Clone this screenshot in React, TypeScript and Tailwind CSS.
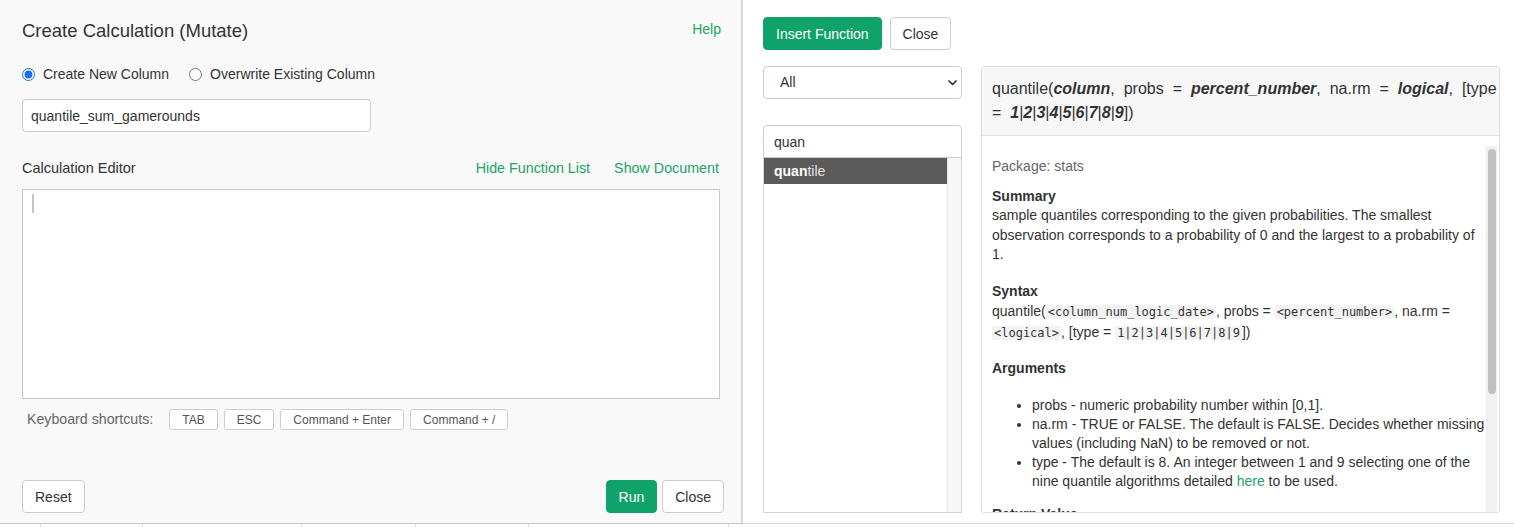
import React from "react";

const font = "font-['Liberation_Sans',Arial,sans-serif]";

function Button({
  children,
  primary,
  className = "",
}: {
  children: React.ReactNode;
  primary?: boolean;
  className?: string;
}) {
  return (
    <button
      className={
        "h-[33px] px-3 rounded-[4px] border text-[14px] leading-5 flex items-center " +
        (primary
          ? "bg-[#0fa36b] border-[#0fa36b] text-white "
          : "bg-white border-[#cccccc] text-[#333] ") +
        className
      }
    >
      {children}
    </button>
  );
}

function Kbd({ children }: { children: React.ReactNode }) {
  return (
    <span className="h-[21px] px-3 flex items-center rounded-[3px] border border-[#cccccc] bg-white text-[12px] text-[#555]">
      {children}
    </span>
  );
}

function Code({ children }: { children: React.ReactNode }) {
  return (
    <code className="font-['DejaVu_Sans_Mono',monospace] text-[12px] bg-[#f3f3f3] rounded-[3px] px-[2px] text-[#333]">
      {children}
    </code>
  );
}

function Radio({ checked, label }: { checked?: boolean; label: string }) {
  return (
    <label className="flex items-center gap-2 text-[14px] text-[#333]">
      <input
        type="radio"
        name="mode"
        defaultChecked={checked}
        className="m-0 w-[13px] h-[13px] accent-[#1a6fe8]"
      />
      {label}
    </label>
  );
}

function LeftPanel() {
  return (
    <div className="w-[743px] h-[524px] shrink-0 bg-[#f9f9f9] border-r-2 border-b border-r-[#d9d9d9] border-b-[#c4c4c4] pl-[22px] pr-[21px] pt-[19px] flex flex-col">
      <div className="flex justify-between items-start">
        <h1 className="text-[18.5px] leading-6 text-[#333]">Create Calculation (Mutate)</h1>
        <a className="text-[14px] leading-5 text-[#21a366] mr-[-1px]">Help</a>
      </div>

      <div className="mt-[21px] h-5 flex items-center gap-5">
        <Radio checked label="Create New Column" />
        <Radio label="Overwrite Existing Column" />
      </div>

      <input
        readOnly
        value="quantile_sum_gamerounds"
        className="mt-[15px] w-[349px] h-[33px] px-2 rounded-[4px] border border-[#cccccc] bg-white text-[14px] text-[#333] outline-none"
      />

      <div className="mt-[27px] h-5 flex items-center justify-between">
        <span className="text-[14.5px] text-[#333]">Calculation Editor</span>
        <div className="flex gap-6 text-[14.3px] text-[#21a366] mr-[1px]">
          <a>Hide Function List</a>
          <a>Show Document</a>
        </div>
      </div>

      <div className="mt-[10px] h-[210px] border border-[#c8c8c8] bg-white pl-[9px] pt-[4px]">
        <div className="w-[2px] h-[19px] bg-[#c4c4c4]" />
      </div>

      <div className="mt-[10px] flex items-center gap-[6px] pl-[5px]">
        <span className="text-[14.2px] text-[#666] mr-[10px]">Keyboard shortcuts:</span>
        <Kbd>TAB</Kbd>
        <Kbd>ESC</Kbd>
        <Kbd>Command + Enter</Kbd>
        <Kbd>Command + /</Kbd>
      </div>

      <div className="mt-[50px] flex items-center mr-[-4px]">
        <Button>Reset</Button>
        <div className="ml-auto flex gap-[5px]">
          <Button primary>Run</Button>
          <Button>Close</Button>
        </div>
      </div>
    </div>
  );
}

function FunctionList() {
  return (
    <div className="w-[199px] shrink-0 flex flex-col">
      <div className="h-[33px] rounded-[4px] border border-[#cccccc] bg-white pl-4 pr-[4px] flex items-center justify-between text-[14px] text-[#333]">
        <span>All</span>
        <svg width="9" height="6" viewBox="0 0 9 6" fill="none">
          <path d="M1 1l3.5 3.5L8 1" stroke="#333" strokeWidth="1.7" strokeLinecap="round" strokeLinejoin="round" />
        </svg>
      </div>

      <div className="mt-[26px] h-[33px] rounded-t-[4px] border border-[#cccccc] bg-white pl-[10px] pt-[1px] flex items-center text-[14px] text-[#333]">
        quan
      </div>

      <div className="h-[355px] flex border-x border-b border-[#d6d6d6] bg-white">
        <div className="flex-1">
          <div className="h-[26px] bg-[#5b5b5b] pl-[10px] flex items-center text-[14px]">
            <b className="text-white">quan</b>
            <span className="text-[#e4e4e4]">tile</span>
          </div>
        </div>
        <div className="w-[14px] bg-[#f7f7f7] border-l border-[#e6e6e6]" />
      </div>
    </div>
  );
}

function DocPanel() {
  const bi = "font-bold italic";
  return (
    <div className="w-[519px] h-[447px] shrink-0 rounded-[3px] border border-[#dddddd] bg-white overflow-hidden flex flex-col">
      <div className="bg-[#f7f7f7] border-b border-[#e2e2e2] pl-[10px] pr-[2px] pt-[10px] pb-[10px] text-[16px] leading-6 text-[#333] [word-spacing:4.5px]">
        quantile(<span className={bi}>column</span>, probs = <span className={bi}>percent_number</span>, na.rm ={" "}
        <span className={bi}>logical</span>, [type
        <br />= <span className={bi}>1</span>|<span className={bi}>2</span>|<span className={bi}>3</span>|
        <span className={bi}>4</span>|<span className={bi}>5</span>|<span className={bi}>6</span>|
        <span className={bi}>7</span>|<span className={bi}>8</span>|<span className={bi}>9</span>])
      </div>

      <div className="flex-1 min-h-0 flex pt-[10px] pr-[2px]">
        <div className="flex-1 min-w-0 pl-[10px] pt-[11px] text-[14px] leading-[19.5px] text-[#333]">
          <p className="text-[#666]">Package: stats</p>

          <h3 className="mt-[10px] font-bold">Summary</h3>
          <p>
            sample quantiles corresponding to the given probabilities. The smallest observation corresponds to a
            probability of 0 and the largest to a probability of 1.
          </p>

          <h3 className="mt-[17px] font-bold">Syntax</h3>
          <p className="mt-[1px]">
            quantile(<Code>&lt;column_num_logic_date&gt;</Code>, probs = <Code>&lt;percent_number&gt;</Code>, na.rm ={" "}
            <Code>&lt;logical&gt;</Code>, [type = <Code>1|2|3|4|5|6|7|8|9</Code>])
          </p>

          <h3 className="mt-[16px] font-bold">Arguments</h3>
          <ul className="mt-[17px] pl-10 list-disc leading-[19px]">
            <li>probs - numeric probability number within [0,1].</li>
            <li>na.rm - TRUE or FALSE. The default is FALSE. Decides whether missing values (including NaN) to be removed or not.</li>
            <li>
              type - The default is 8. An integer between 1 and 9 selecting one of the nine quantile algorithms detailed{" "}
              <a className="text-[#21a366]">here</a> to be used.
            </li>
          </ul>

          <h3 className="mt-[14px] font-bold">Return Value</h3>
        </div>
        <div className="w-[11px] shrink-0 bg-[#f1f1f1] border-l border-[#e8e8e8] pt-[3px] px-[1px]">
          <div className="h-[245px] rounded-full bg-[#c1c1c1]" />
        </div>
      </div>
    </div>
  );
}

function RightPanel() {
  return (
    <div className="flex-1 h-[524px] bg-white border-b border-[#d9d9d9] pl-[20px] pt-[17px] flex flex-col">
      <div className="flex gap-2">
        <Button primary>Insert Function</Button>
        <Button>Close</Button>
      </div>
      <div className="mt-4 flex gap-[19px]">
        <FunctionList />
        <DocPanel />
      </div>
    </div>
  );
}

export default function App() {
  const cells = [41, 102, 159, 114, 113, 200];
  return (
    <div className={`w-[1514px] h-[527px] overflow-hidden bg-white ${font}`}>
      <div className="flex">
        <LeftPanel />
        <RightPanel />
      </div>
      <div className="h-[3px] flex">
        {cells.map((w, i) => (
          <div key={i} className="h-full border-r border-[#dddddd]" style={{ width: w }} />
        ))}
      </div>
    </div>
  );
}
